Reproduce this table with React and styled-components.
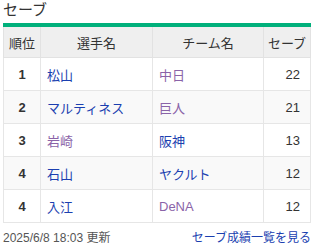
import React from "react";
import styled, { createGlobalStyle } from "styled-components";

const GlobalStyle = createGlobalStyle`
  body {
    margin: 0;
    background: #fff;
    font-family: "Liberation Sans", "Noto Sans CJK JP", sans-serif;
    color: #333;
  }
`;

const rows = [
  { rank: 1, name: "松山", nameVisited: false, team: "中日", teamVisited: true, saves: 22 },
  { rank: 2, name: "マルティネス", nameVisited: false, team: "巨人", teamVisited: true, saves: 21 },
  { rank: 3, name: "岩崎", nameVisited: true, team: "阪神", teamVisited: false, saves: 13 },
  { rank: 4, name: "石山", nameVisited: false, team: "ヤクルト", teamVisited: false, saves: 12 },
  { rank: 4, name: "入江", nameVisited: false, team: "DeNA", teamVisited: true, saves: 12 },
];

const App = () => {
  return (
    <>
      <GlobalStyle />
      <Wrapper>
        <Title>セーブ</Title>
        <Table>
          <thead>
            <tr>
              <Th style={{ width: 36 }}>順位</Th>
              <Th style={{ width: 111 }}>選手名</Th>
              <Th style={{ width: 110 }}>チーム名</Th>
              <Th>セーブ</Th>
            </tr>
          </thead>
          <tbody>
            {rows.map((r, i) => (
              <Row key={i} $even={i % 2 === 1}>
                <RankCell>{r.rank}</RankCell>
                <Td>
                  <Link $visited={r.nameVisited}>{r.name}</Link>
                </Td>
                <Td>
                  <Link $visited={r.teamVisited}>{r.team}</Link>
                </Td>
                <NumCell>{r.saves}</NumCell>
              </Row>
            ))}
          </tbody>
        </Table>
        <Footer>
          <Updated>2025/6/8 18:03 更新</Updated>
          <Link>セーブ成績一覧を見る</Link>
        </Footer>
      </Wrapper>
    </>
  );
};

const Wrapper = styled.div`
  width: 308px;
  padding: 0 5px 0 3px;
`;

const Title = styled.h2`
  margin: 0;
  height: 23px;
  font-size: 15px;
  font-weight: normal;
  line-height: 19px;
  color: #333;
`;

const Table = styled.table`
  width: 308px;
  border-collapse: collapse;
  border-top: 4px solid #00b07b;
  table-layout: fixed;
  font-size: 13px;
`;

const Th = styled.th`
  height: 30px;
  padding: 0;
  background: #efefef;
  border: 1px solid #e2e2e2;
  border-top: none;
  font-weight: normal;
  font-size: 13px;
  color: #333;
  text-align: center;
`;

const Row = styled.tr`
  background: ${({ $even }) => ($even ? "#f9f9f9" : "#fff")};
`;

const Td = styled.td`
  height: 32px;
  padding: 0 0 0 6px;
  border: 1px solid #e6e6e6;
`;

const RankCell = styled(Td)`
  padding: 0;
  text-align: center;
  font-weight: bold;
  color: #333;
`;

const NumCell = styled(Td)`
  padding: 0 10px 0 0;
  text-align: right;
  color: #333;
`;

const Link = styled.a`
  color: ${({ $visited }) => ($visited ? "#8a63a8" : "#1b3fb0")};
  text-decoration: none;
  cursor: pointer;
`;

const Footer = styled.div`
  display: flex;
  justify-content: space-between;
  align-items: center;
  margin-top: 5px;
  font-size: 12px;
`;

const Updated = styled.span`
  color: #555;
`;

export default App;
